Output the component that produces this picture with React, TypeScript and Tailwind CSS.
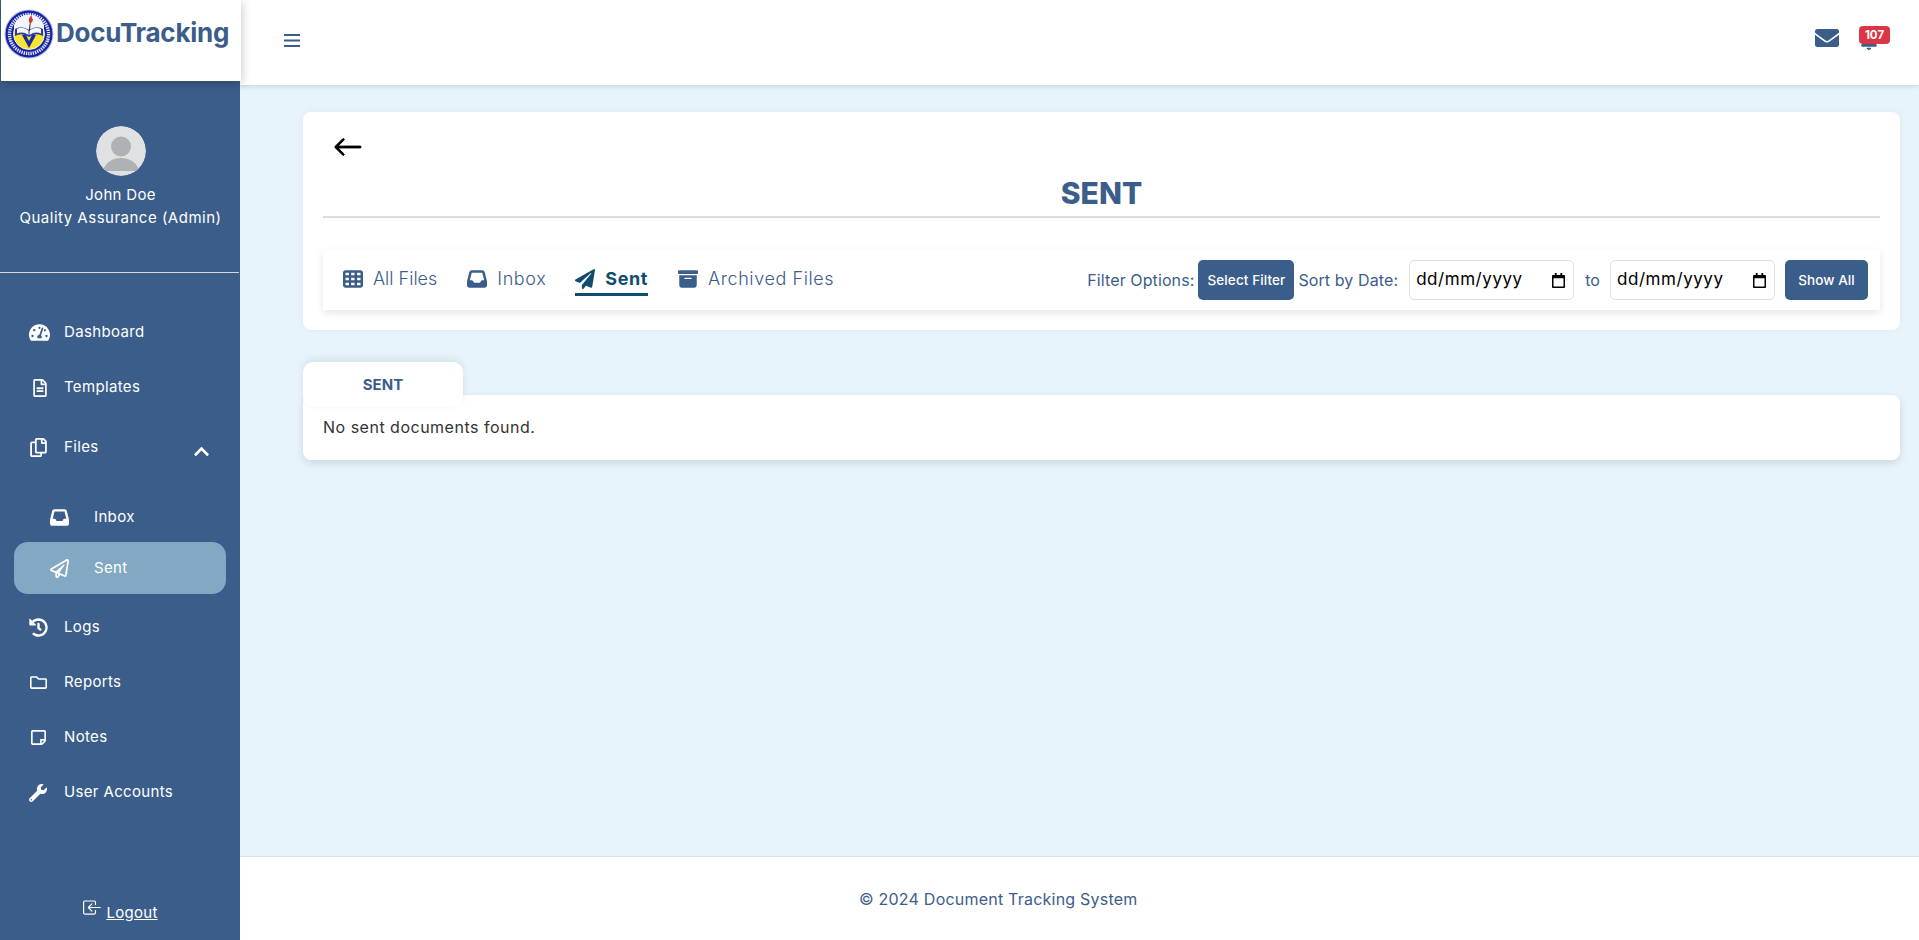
import React from "react";
import {
  FaTachometerAlt, FaRegFileAlt, FaRegCopy, FaRegPaperPlane, FaHistory, FaRegFolder,
  FaRegStickyNote, FaWrench, FaPaperPlane, FaEnvelope, FaBell, FaChevronUp,
} from "react-icons/fa";
import { FaInbox, FaTableCells, FaBoxArchive } from "react-icons/fa6";
import { BsArrowLeft, BsBoxArrowInLeft } from "react-icons/bs";

function Seal() {
  return (
    <svg viewBox="0 0 50 50" className="w-[50px] h-[50px] shrink-0">
      <circle cx="25" cy="25" r="24.5" fill="#b9bfd6" />
      <circle cx="25" cy="25" r="23.5" fill="#1420a8" />
      <circle cx="25" cy="25" r="19.5" fill="none" stroke="#dfe3f5" strokeWidth="3.4" strokeDasharray="1.4 0.9" />
      <circle cx="25" cy="25" r="15.5" fill="#f7e52e" stroke="#fff" strokeWidth="0.8" />
      <path d="M10 16 A16 16 0 0 1 40 16 L40 22 L10 22 Z" fill="#f4f6fb" />
      <path d="M11 20 Q18 16 25 21 Q32 16 39 20 L39 27 Q32 23 25 28 Q18 23 11 27 Z" fill="#2a3aa8" />
      <path d="M13 20 Q19 17 24.5 21.5 L24.5 26 Q19 22 13 24.5 Z" fill="#f5f5f5" />
      <path d="M37 20 Q31 17 25.5 21.5 L25.5 26 Q31 22 37 24.5 Z" fill="#f5f5f5" />
      <path d="M18 26 L25 39 L32 26 L28 26 L25 32 L22 26 Z" fill="#1c2aa0" />
      <path d="M24.6 22 L26 12 L27 12 L25.8 22 Z" fill="#333" />
      <path d="M25 13 Q24 9 28 6 Q27 9 29 10 Q29 13 26.5 14 Z" fill="#d8352c" />
      <circle cx="6" cy="32" r="0.8" fill="#fff" />
      <circle cx="44" cy="32" r="0.8" fill="#fff" />
    </svg>
  );
}

function Avatar() {
  return (
    <svg viewBox="0 0 50 50" className="w-[50px] h-[50px] rounded-full">
      <circle cx="25" cy="25" r="25" fill="#dfe1e3" />
      <circle cx="25" cy="20.5" r="10" fill="#aeb2b5" />
      <path d="M7 45 C9 36 17 32 25 32 C33 32 41 36 43 45 Z" fill="#aeb2b5" />
    </svg>
  );
}

function NavItem({ icon, label, className = "" }: { icon: React.ReactNode; label: string; className?: string }) {
  return (
    <div className={`flex items-center h-[55px] pl-[29px] ${className}`}>
      <span className="w-[35px] flex items-center">{icon}</span>
      <span className="text-[15px] tracking-[0.35px] text-white">{label}</span>
    </div>
  );
}

function Tab({ icon, label, active = false, className = "", textClass = "tracking-[0.6px]" }: { icon: React.ReactNode; label: string; active?: boolean; className?: string; textClass?: string }) {
  return (
    <div className={`flex items-center gap-[10px] h-[32px] border-b-[3px] ${className} ${active ? "border-[#0f4c6e] text-[#0f4c6e] font-bold" : "border-transparent text-[#3b5d8a] font-light"}`}>
      {icon}
      <span className={`text-[18px] ${textClass}`}>{label}</span>
    </div>
  );
}

function DateBox() {
  return (
    <div className="w-[165px] h-[40px] flex items-center justify-between bg-white border border-[#dee2e6] rounded-[5px] pl-[6px] pr-[8px]">
      <span className="text-[17px] tracking-[0.55px] text-black">dd/mm/yyyy</span>
      <svg viewBox="0 0 14 16" className="w-[13px] h-[15px]">
        <path d="M3 0h2v2h4V0h2v2h2a1 1 0 0 1 1 1v12a1 1 0 0 1-1 1H1a1 1 0 0 1-1-1V3a1 1 0 0 1 1-1h2z M1.6 5.5v9h10.8v-9z" fill="#000" fillRule="evenodd" />
      </svg>
    </div>
  );
}

export default function App() {
  return (
    <div className="flex w-full h-screen overflow-hidden bg-[#e7f4fc] font-['Inter','Liberation_Sans',sans-serif]">
      <aside className="w-[240px] shrink-0 bg-[#3b5d8a] flex flex-col relative z-20">
        <div className="h-[81px] ml-[1px] w-[240px] bg-white flex items-start pt-[9px] pl-[3px] gap-[2px] shadow-[0_2px_10px_rgba(0,0,0,0.25)]">
          <Seal />
          <span className="text-[26px] font-bold tracking-[-0.25px] text-[#3b5d8a] leading-[50px] -mt-[1px]">DocuTracking</span>
        </div>
        <div className="flex flex-col items-center pt-[45px] pl-[2px] h-[192px] border-b border-[#d6d6d6] mr-[1px] shrink-0">
          <Avatar />
          <div className="mt-[7px] text-[15px] leading-[24px] text-white text-center tracking-[0.3px]">John Doe</div>
          <div className="-mt-[1px] text-[15px] leading-[24px] text-white text-center tracking-[0.5px]">Quality Assurance (Admin)</div>
        </div>
        <nav className="flex flex-col pt-[32px]">
          <NavItem icon={<FaTachometerAlt className="text-[21px] text-white" />} label="Dashboard" />
          <NavItem icon={<FaRegFileAlt className="text-[18px] text-white ml-[2px]" />} label="Templates" />
          <div className="flex items-center h-[55px] mt-[5px] pl-[29px] relative">
            <span className="w-[35px] flex items-center"><FaRegCopy className="text-[19px] text-white" /></span>
            <span className="text-[15px] text-white tracking-[0.35px]">Files</span>
            <FaChevronUp className="absolute left-[193px] top-[23px] text-[17px] text-white" />
          </div>
          <div className="flex items-center h-[52px] mt-[15px] mx-[14px] pl-[36px] pt-[2px]">
            <span className="w-[44px] flex"><FaInbox className="text-[19px] text-white" /></span>
            <span className="text-[15px] tracking-[0.35px] text-white">Inbox</span>
          </div>
          <div className="flex items-center h-[52px] mx-[14px] pl-[36px] bg-[#82a8c3] rounded-[14px]">
            <span className="w-[44px] flex"><FaRegPaperPlane className="text-[19px] text-white" /></span>
            <span className="text-[15px] tracking-[0.35px] text-white">Sent</span>
          </div>
          <NavItem className="mt-[6px]" icon={<FaHistory className="text-[19px] text-white" />} label="Logs" />
          <NavItem icon={<FaRegFolder className="text-[17px] text-white ml-[1px]" />} label="Reports" />
          <NavItem icon={<FaRegStickyNote className="text-[17px] text-white ml-[1px]" />} label="Notes" />
          <NavItem icon={<FaWrench className="text-[18px] text-white" />} label="User Accounts" />
        </nav>
        <div className="mt-auto h-[38px] flex justify-center items-start">
          <span className="flex items-start text-white text-[15px] tracking-[0.3px] underline ml-[1px]">
            <BsBoxArrowInLeft className="text-[19px] mr-[4px] -mt-[4px]" />
            Logout
          </span>
        </div>
      </aside>

      <div className="flex-1 min-w-0 flex flex-col">
        <header className="h-[85px] shrink-0 bg-white flex items-center justify-between pl-[44px] pr-[29px] shadow-[0_1px_5px_rgba(0,0,0,0.15)] relative z-10">
          <svg viewBox="0 0 16 13" className="w-[16px] h-[13px] -mt-[4px]">
            <path d="M0 0h16v2H0z M0 5.5h16v2H0z M0 11h16v2H0z" fill="#3b5d8a" />
          </svg>
          <div className="flex items-center gap-[20px] -mt-[10px]">
            <FaEnvelope className="text-[24px] text-[#3b5d8a]" />
            <div className="relative w-[31px] h-[24px]">
              <FaBell className="absolute left-[1px] top-[6px] text-[18px] text-[#3b5d8a]" />
              <span className="absolute left-0 top-0 w-[31px] h-[18px] rounded-[4px] bg-[#dc3545] text-white text-[11.5px] font-bold leading-[18px] text-center">107</span>
            </div>
          </div>
        </header>

        <main className="flex-1 min-h-0 pt-[27px] pl-[63px] pr-[19px]">
          <section className="bg-white rounded-[8px] h-[218px] px-[20px] shadow-[0_0_8px_rgba(0,0,0,0.05)]">
            <div className="h-[52px] pt-[20px] pl-[10px]">
              <BsArrowLeft className="text-[30px] text-black" strokeWidth={0.5} />
            </div>
            <h1 className="h-[54px] text-center text-[30px] font-extrabold leading-[58px] text-[#3b5d8a] border-b-2 border-[#dcdcdc]">SENT</h1>
            <div className="mt-[32px] h-[60px] flex items-center justify-between pl-[20px] pr-[12px] bg-white shadow-[0_3px_8px_rgba(0,0,0,0.1)]">
              <div className="flex items-center">
                <Tab textClass="tracking-normal" icon={<FaTableCells className="text-[20px]" />} label="All Files" />
                <Tab className="ml-[30px]" icon={<FaInbox className="text-[20px]" />} label="Inbox" />
                <Tab className="ml-[29px]" icon={<FaPaperPlane className="text-[20px]" />} label="Sent" active />
                <Tab className="ml-[30px]" icon={<FaBoxArchive className="text-[20px]" />} label="Archived Files" />
              </div>
              <div className="flex items-center text-[16px] tracking-[0.1px] text-[#3b5d8a]">
                <span className="mr-[4px]">Filter Options:</span>
                <button className="w-[96px] h-[40px] bg-[#3b5d8a] text-white text-[13.5px] font-medium rounded-[5px] mr-[4px]">Select Filter</button>
                <span className="mr-[11px]">Sort by Date:</span>
                <DateBox />
                <span className="ml-[11px] mr-[10px]">to</span>
                <DateBox />
                <button className="w-[83px] h-[40px] ml-[10px] bg-[#3b5d8a] text-white text-[13.5px] font-medium rounded-[5px]">Show All</button>
              </div>
            </div>
          </section>

          <section className="relative mt-[32px]">
            <div className="absolute left-0 top-0 z-10 w-[160px] h-[45px] bg-white rounded-[10px] shadow-[0_-3px_8px_rgba(0,0,0,0.08)] text-center text-[15px] font-bold leading-[45px] text-[#3b5d8a]">SENT</div>
            <div className="pt-[33px]">
              <div className="h-[65px] bg-white rounded-[8px] shadow-[0_3px_8px_rgba(0,0,0,0.12)] pl-[20px] pt-[19px] text-[16px] tracking-[0.5px] leading-[26px] text-[#333]">
                <span className="relative z-20">No sent documents found.</span>
              </div>
            </div>
          </section>
        </main>

        <footer className="h-[84px] shrink-0 bg-white border-t border-[#dfe3e6] flex items-center pl-[619px] text-[16px] tracking-[0.22px] text-[#3b5d8a]">
          © 2024 Document Tracking System
        </footer>
      </div>
    </div>
  );
}
